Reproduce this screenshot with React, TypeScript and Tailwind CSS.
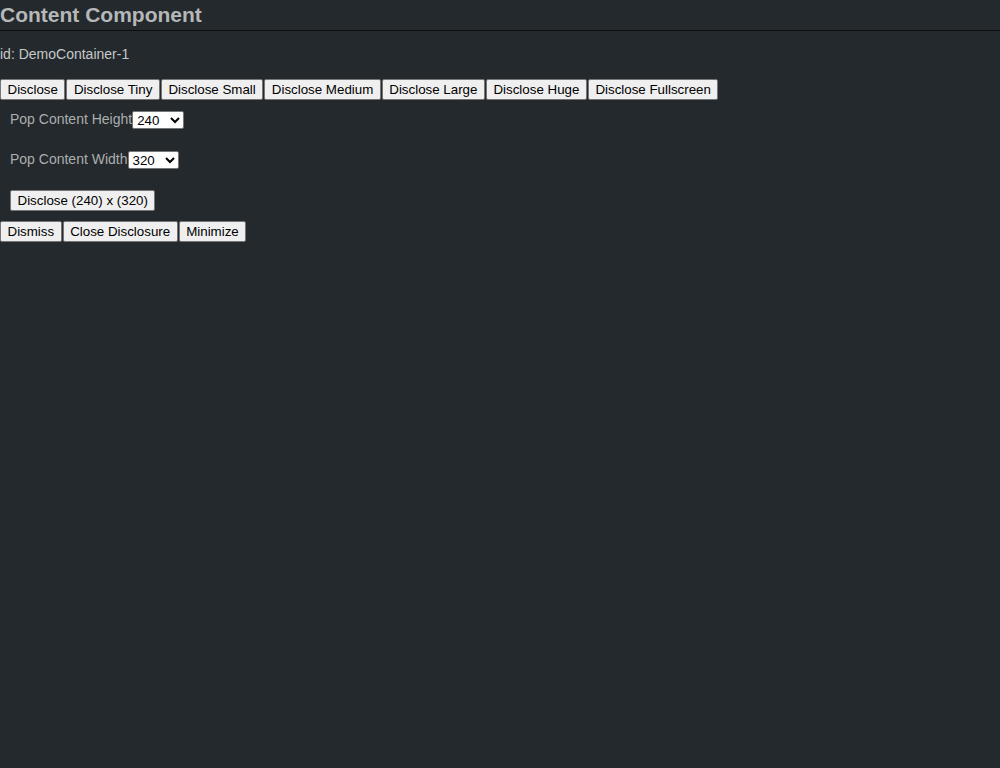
import React, { useState } from 'react';

const font = { fontFamily: '"Liberation Sans", Arial, sans-serif' };

const Btn: React.FC<{ children: React.ReactNode }> = ({ children }) => (
  <button
    type="button"
    className="h-[21px] px-[6.5px] bg-[#efefef] text-black text-[13.33px] leading-none border border-[#767676] rounded-[2px] whitespace-nowrap"
  >
    {children}
  </button>
);

export default function App() {
  const [height, setHeight] = useState('240');
  const [width, setWidth] = useState('320');

  return (
    <div className="min-h-screen w-full bg-[#23292c]" style={font}>
      <div className="h-[31px] border-b border-[#0b0d0e] pt-[3px]">
        <h1 className="text-[21px] leading-[24px] font-bold text-[#b5b7b8]">Content Component</h1>
      </div>
      <div className="mt-[15px] text-[14px] leading-[16px] text-[#c6c8c9]">id: DemoContainer-1</div>

      <div className="mt-[17px] flex gap-[1px]">
        <Btn>Disclose</Btn>
        <Btn>Disclose Tiny</Btn>
        <Btn>Disclose Small</Btn>
        <Btn>Disclose Medium</Btn>
        <Btn>Disclose Large</Btn>
        <Btn>Disclose Huge</Btn>
        <Btn>Disclose Fullscreen</Btn>
      </div>

      <div className="pl-[10px] pt-[10px] flex flex-col gap-[21px] items-start">
        <label className="flex items-center h-[19px] text-[14px] text-[#acaeaf]">
          Pop Content Height
          <select
            value={height}
            onChange={(e) => setHeight(e.target.value)}
            className="h-[18px] w-[52px] bg-white text-black text-[13.33px] border border-[#767676] rounded-[2px]"
          >
            <option value="120">120</option>
            <option value="240">240</option>
            <option value="480">480</option>
          </select>
        </label>
        <label className="flex items-center h-[19px] text-[14px] text-[#acaeaf]">
          Pop Content Width
          <select
            value={width}
            onChange={(e) => setWidth(e.target.value)}
            className="h-[18px] w-[51px] bg-white text-black text-[13.33px] border border-[#767676] rounded-[2px]"
          >
            <option value="160">160</option>
            <option value="320">320</option>
            <option value="640">640</option>
          </select>
        </label>
        <Btn>
          Disclose ({height}) x ({width})
        </Btn>
      </div>

      <div className="mt-[10px] flex gap-[1px]">
        <Btn>Dismiss</Btn>
        <Btn>Close Disclosure</Btn>
        <Btn>Minimize</Btn>
      </div>
    </div>
  );
}
